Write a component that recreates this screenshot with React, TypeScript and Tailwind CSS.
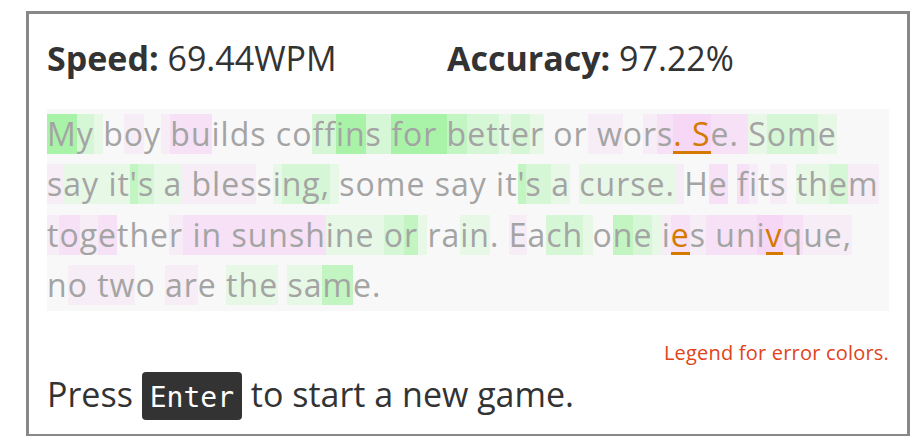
const LEVELS: Record<string, string> = {
  "0": "",
  a: "bg-[#e7f8e7]",
  b: "bg-[#d5f7d5]",
  c: "bg-[#c2f5c2]",
  d: "bg-[#a9f3a9]",
  x: "bg-[#f6edf6]",
  y: "bg-[#f6e1f6]",
  z: "bg-[#f6d7f6]",
};

// text, per-char speed level, indices typed wrong
const lines: { text: string; levels: string; errors: number[] }[] = [
  {
    text: "My boy builds coffins for better or wors. Se. Some",
    levels: "dba0x0xyy" + "0000000" + "bbddbb" + "dddd" + "cbbaba" + "000" + "xx0xy" + "zzz" + "yyy" + "abba",
    errors: [40, 41, 42],
  },
  {
    text: "say it's a blessing, some say it's a curse. He fits them",
    levels: "xaaaaacbaa" + "xxxxx" + "0abbba" + "00000000000" + "cbba0" + "aaaaaa" + "x0y0yx0x0" + "aabx",
    errors: [],
  },
  {
    text: "together in sunshine or rain. Each one ies univque,",
    levels: "xyxy000x" + "y" + "yy" + "y" + "yyyyyaaa" + "a" + "bc" + "a" + "00aa0" + "0" + "x0bb" + "a" + "0cb" + "a" + "xyx" + "y" + "yyzzyxxx",
    errors: [40, 46],
  },
  {
    text: "no two are the same.",
    levels: "0xxxx00xx00aaa0aac00",
    errors: [],
  },
];

function PassageLine({ text, levels, errors }: { text: string; levels: string; errors: number[] }) {
  return (
    <div className="whitespace-pre">
      {text.split("").map((ch, i) => {
        const err = errors.includes(i);
        return (
          <span
            key={i}
            className={`inline-block h-[40px] leading-[40px] ${LEVELS[levels[i]] ?? ""} ${err ? "text-[#d47a00] shadow-[inset_0_-3px_0_#d47a00]" : ""}`}
          >
            {ch}
          </span>
        );
      })}
    </div>
  );
}

export default function App() {
  return (
    <div className="min-h-screen bg-white pt-[11px] pl-[26px] font-['Open_Sans',sans-serif]">
      <div className="w-[884px] h-[426px] border-[3px] border-[#888888] px-[18px] pt-[23px]">
        <div className="flex text-[34px] leading-[42px] text-[#333333]">
          <div className="w-[400px]">
            <span className="font-bold">Speed:</span> 69.44WPM
          </div>
          <div>
            <span className="font-bold">Accuracy:</span> 97.22%
          </div>
        </div>

        <div className="mt-[30px] bg-[#f8f8f8] text-[32px] leading-[50.4px] tracking-[1px] text-[#a4a4a4]">
          {lines.map((l, i) => (
            <PassageLine key={i} {...l} />
          ))}
        </div>

        <div className="mt-[30px] text-right text-[20px] leading-[24px] tracking-[0.2px] text-[#e0441c]">
          Legend for error colors.
        </div>

        <div className="mt-[5px] text-[34px] leading-[48px] text-[#333333]">
          Press{" "}
          <kbd className="inline-block rounded-[4px] bg-[#333333] px-[8px] pt-[9px] pb-[6px] font-['DejaVu_Sans_Mono',monospace] text-[28px] leading-[33px] text-white">
            Enter
          </kbd>{" "}
          to start a new game.
        </div>
      </div>
    </div>
  );
}
